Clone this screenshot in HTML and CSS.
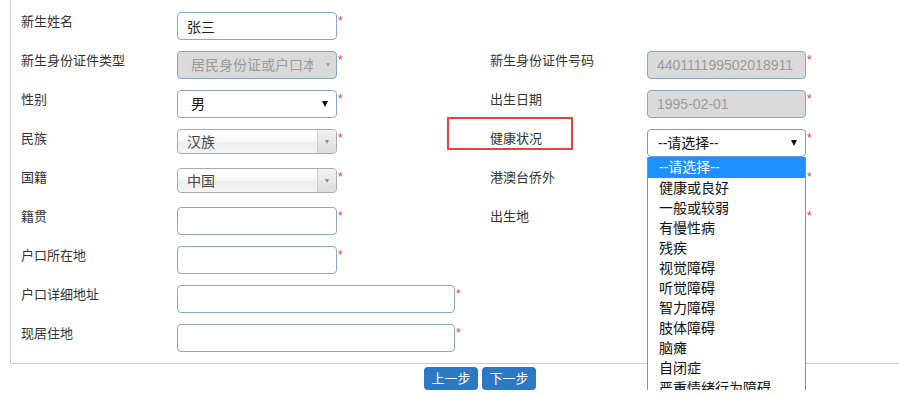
FILE: index.html
```html
<!DOCTYPE html>
<html lang="zh-CN">
<head>
<meta charset="utf-8">
<title>新生信息</title>
<link rel="stylesheet" href="styles.css">
</head>
<body>
<div class="page">
  <div class="frame">
    <div class="row">
      <div class="field">
        <span class="lbl">新生姓名</span>
        <div class="ctl"><input class="inp" type="text" value="张三"><span class="req">*</span></div>
      </div>
    </div>
    <div class="row">
      <div class="field">
        <span class="lbl">新生身份证件类型</span>
        <div class="ctl"><div class="sel sel-disabled"><span class="sel-txt">居民身份证或户口本</span><span class="tri tri-gray"></span></div><span class="req">*</span></div>
      </div>
      <div class="field field-right">
        <span class="lbl lbl-right">新生身份证件号码</span>
        <div class="ctl"><div class="inp inp-disabled inp-r">440111199502018911</div><span class="req">*</span></div>
      </div>
    </div>
    <div class="row">
      <div class="field">
        <span class="lbl">性别</span>
        <div class="ctl"><div class="sel"><span class="sel-txt sel-txt-b">男</span><span class="tri"></span></div><span class="req">*</span></div>
      </div>
      <div class="field field-right">
        <span class="lbl lbl-right">出生日期</span>
        <div class="ctl"><div class="inp inp-disabled inp-r">1995-02-01</div><span class="req">*</span></div>
      </div>
    </div>
    <div class="row">
      <div class="field">
        <span class="lbl">民族</span>
        <div class="ctl"><div class="chosen"><span class="chosen-txt">汉族</span><span class="chosen-arr"><span class="tri tri-small"></span></span></div><span class="req">*</span></div>
      </div>
      <div class="field field-right">
        <span class="lbl lbl-right">健康状况<span class="mark"></span></span>
        <div class="ctl ctl-drop">
          <div class="sel sel-r sel-focus"><span class="sel-txt sel-txt-h">--请选择--</span><span class="tri"></span></div><span class="req">*</span>
          <ul class="droplist">
            <li class="opt opt-on">--请选择--</li>
            <li class="opt">健康或良好</li>
            <li class="opt">一般或较弱</li>
            <li class="opt">有慢性病</li>
            <li class="opt">残疾</li>
            <li class="opt">视觉障碍</li>
            <li class="opt">听觉障碍</li>
            <li class="opt">智力障碍</li>
            <li class="opt">肢体障碍</li>
            <li class="opt">脑瘫</li>
            <li class="opt">自闭症</li>
            <li class="opt">严重情绪行为障碍</li>
          </ul>
        </div>
      </div>
    </div>
    <div class="row">
      <div class="field">
        <span class="lbl">国籍</span>
        <div class="ctl"><div class="chosen"><span class="chosen-txt">中国</span><span class="chosen-arr"><span class="tri tri-small"></span></span></div><span class="req">*</span></div>
      </div>
      <div class="field field-right">
        <span class="lbl lbl-right">港澳台侨外</span>
        <div class="ctl"><div class="sel sel-r"></div><span class="req">*</span></div>
      </div>
    </div>
    <div class="row">
      <div class="field">
        <span class="lbl">籍贯</span>
        <div class="ctl"><input class="inp" type="text" value=""><span class="req">*</span></div>
      </div>
      <div class="field field-right">
        <span class="lbl lbl-right">出生地</span>
        <div class="ctl"><input class="inp inp-r" type="text" value=""><span class="req">*</span></div>
      </div>
    </div>
    <div class="row">
      <div class="field">
        <span class="lbl">户口所在地</span>
        <div class="ctl"><input class="inp" type="text" value=""><span class="req">*</span></div>
      </div>
    </div>
    <div class="row">
      <div class="field">
        <span class="lbl">户口详细地址</span>
        <div class="ctl"><input class="inp inp-wide" type="text" value=""><span class="req">*</span></div>
      </div>
    </div>
    <div class="row">
      <div class="field">
        <span class="lbl">现居住地</span>
        <div class="ctl"><input class="inp inp-wide" type="text" value=""><span class="req">*</span></div>
      </div>
    </div>
  </div>
  <div class="actions">
    <button class="btn" type="button">上一步</button>
    <button class="btn" type="button">下一步</button>
  </div>
</div>
</body>
</html>
```

FILE: styles.css
```css
html, body {
  margin: 0;
  padding: 0;
  background: #fff;
  overflow: hidden;
}
body {
  font-family: "Liberation Sans", "Noto Sans CJK SC", sans-serif;
  color: #333;
}
.page {
  width: 960px;
}
.frame {
  margin-left: 10px;
  width: 940px;
  border-left: 1px solid #ccc;
  border-bottom: 1px solid #ccc;
  padding: 12px 0 11px 10px;
  box-sizing: border-box;
}
.row {
  display: flex;
  height: 28px;
  margin-bottom: 11px;
}
.row:last-child {
  margin-bottom: 0;
}
.field {
  display: flex;
  width: 469px;
  align-items: flex-start;
}
.field-right {
  width: auto;
}
.lbl {
  width: 156px;
  flex: none;
  font-size: 13px;
  line-height: 20px;
  color: #333;
  position: relative;
}
.lbl-right {
  width: 157px;
}
.mark {
  position: absolute;
  left: -43px;
  top: -12px;
  width: 122px;
  height: 29px;
  border: 2px solid #e8403f;
}
.ctl {
  display: flex;
  align-items: flex-start;
  position: relative;
}
.req {
  color: #e4393c;
  font-size: 12px;
  line-height: 12px;
  margin-top: 3px;
  margin-left: 1px;
}
.inp {
  width: 160px;
  height: 28px;
  box-sizing: border-box;
  border: 1px solid #87a7cf;
  border-radius: 4px;
  padding: 0 9px;
  font-family: "Liberation Sans", "Noto Sans CJK SC", sans-serif;
  font-size: 14px;
  line-height: 26px;
  color: #222;
  background: #fff;
  outline: none;
  margin: 0;
}
.inp-r {
  width: 159px;
}
.inp-wide {
  width: 278px;
}
.inp-disabled {
  background: #dadada;
  color: #9a9a9a;
  white-space: nowrap;
  overflow: hidden;
}
.sel {
  width: 160px;
  height: 28px;
  box-sizing: border-box;
  border: 1px solid #87a7cf;
  border-radius: 4px;
  background: #fff;
  display: flex;
  align-items: center;
  padding: 0 8px 0 0;
  font-size: 14px;
  color: #222;
}
.sel-r {
  width: 159px;
}
.sel-focus {
  border-color: #6b9fe2;
}
.sel-disabled {
  background: #dadada;
  color: #9a9a9a;
}
.sel-txt {
  flex: 1;
  padding-left: 13px;
  white-space: nowrap;
  overflow: hidden;
  line-height: 26px;
  margin-right: 13px;
}
.sel-txt-b {
  padding-left: 13px;
  color: #111;
}
.sel-txt-h {
  padding-left: 10px;
  color: #111;
}
.tri {
  width: 0;
  height: 0;
  border-left: 3px solid transparent;
  border-right: 3px solid transparent;
  border-top: 6px solid #111;
  flex: none;
}
.tri-gray {
  border-top-color: #a0a0a0;
  border-left-width: 2.5px;
  border-right-width: 2.5px;
  border-top-width: 4px;
  margin-right: -2px;
}
.tri-small {
  border-left-width: 2.5px;
  border-right-width: 2.5px;
  border-top: 4px solid #8d8d8d;
}
.chosen {
  width: 160px;
  height: 25px;
  box-sizing: border-box;
  border: 1px solid #aaa;
  border-radius: 4px;
  background: linear-gradient(#fff 20%, #f6f6f6 50%, #eee 52%, #f4f4f4 100%);
  display: flex;
  font-size: 14px;
  color: #444;
  overflow: hidden;
}
.chosen-txt {
  flex: 1;
  padding-left: 9px;
  line-height: 24px;
}
.chosen-arr {
  width: 18px;
  border-left: 1px solid #ccc;
  background: linear-gradient(#f2f2f2, #dcdcdc);
  display: flex;
  align-items: center;
  justify-content: center;
}
.ctl-drop {
  z-index: 5;
}
.droplist {
  position: absolute;
  left: 0;
  top: 28px;
  width: 159px;
  box-sizing: border-box;
  margin: 0;
  padding: 0;
  list-style: none;
  background: #fff;
  border: 1px solid #7e94ad;
  border-top: none;
  z-index: 10;
}
.opt {
  height: 20px;
  line-height: 21px;
  padding-left: 11px;
  font-size: 14px;
  color: #111;
  white-space: nowrap;
}
.opt-on {
  height: 21px;
  line-height: 21px;
  background: #1e90ff;
  color: #fff;
}
.actions {
  display: flex;
  justify-content: center;
  gap: 4px;
  margin-top: 3px;
}
.btn {
  width: 54px;
  height: 23px;
  border: none;
  border-radius: 4px;
  background: #2b78c6;
  color: #fff;
  font-family: "Liberation Sans", "Noto Sans CJK SC", sans-serif;
  font-size: 13px;
  line-height: 23px;
  padding: 0;
}
```
